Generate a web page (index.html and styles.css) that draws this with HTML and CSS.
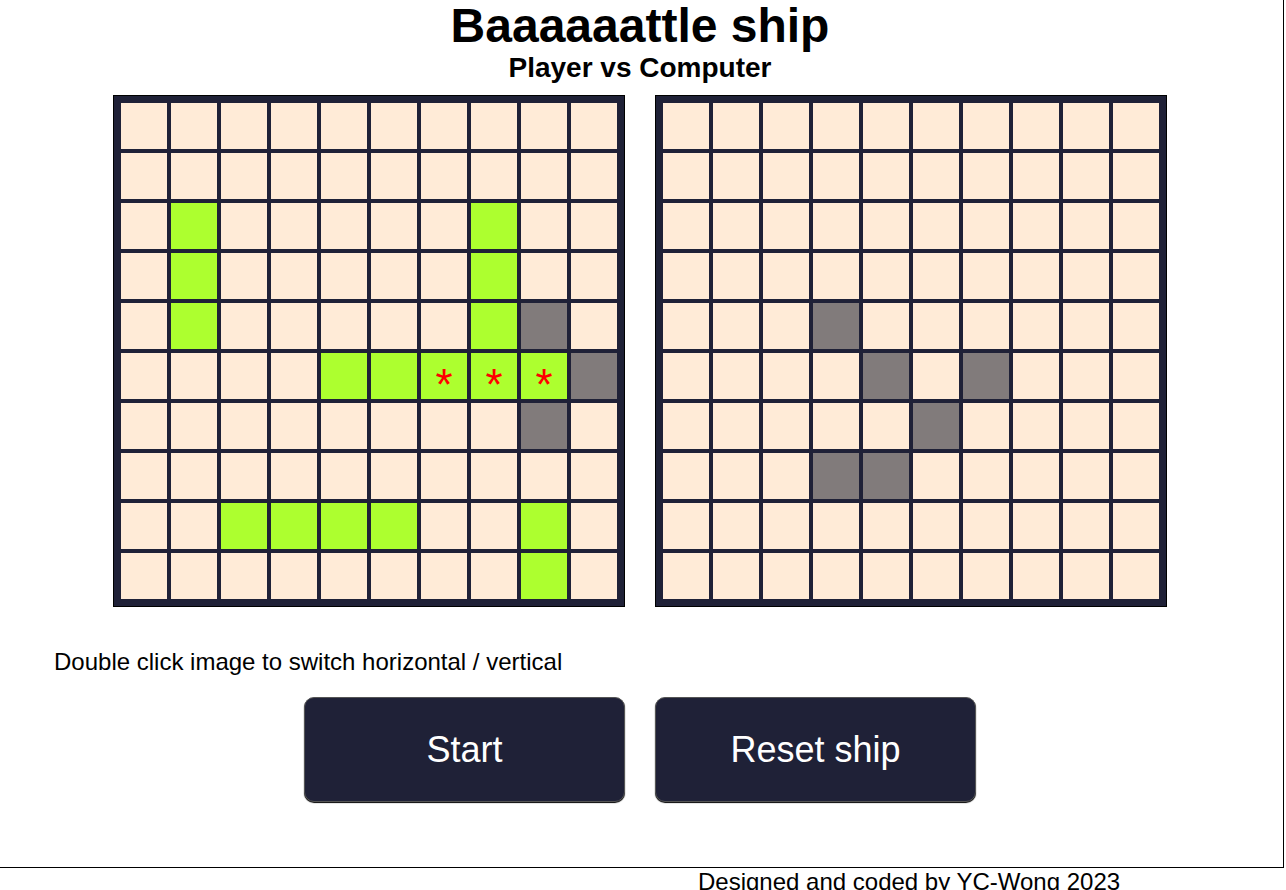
FILE: index.html
```html
<!DOCTYPE html>
<html lang="en">
<head>
<meta charset="utf-8">
<title>Baaaaaattle ship</title>
<link rel="stylesheet" href="styles.css">
</head>
<body>
<div class="page">
  <header class="header">
    <h1 class="title">Baaaaaattle ship</h1>
    <h2 class="subtitle">Player vs Computer</h2>
  </header>
  <main class="boards">
    <div class="board">
      <div class="cell"></div><div class="cell"></div><div class="cell"></div><div class="cell"></div><div class="cell"></div><div class="cell"></div><div class="cell"></div><div class="cell"></div><div class="cell"></div><div class="cell"></div>
      <div class="cell"></div><div class="cell"></div><div class="cell"></div><div class="cell"></div><div class="cell"></div><div class="cell"></div><div class="cell"></div><div class="cell"></div><div class="cell"></div><div class="cell"></div>
      <div class="cell"></div><div class="cell ship"></div><div class="cell"></div><div class="cell"></div><div class="cell"></div><div class="cell"></div><div class="cell"></div><div class="cell ship"></div><div class="cell"></div><div class="cell"></div>
      <div class="cell"></div><div class="cell ship"></div><div class="cell"></div><div class="cell"></div><div class="cell"></div><div class="cell"></div><div class="cell"></div><div class="cell ship"></div><div class="cell"></div><div class="cell"></div>
      <div class="cell"></div><div class="cell ship"></div><div class="cell"></div><div class="cell"></div><div class="cell"></div><div class="cell"></div><div class="cell"></div><div class="cell ship"></div><div class="cell miss"></div><div class="cell"></div>
      <div class="cell"></div><div class="cell"></div><div class="cell"></div><div class="cell"></div><div class="cell ship"></div><div class="cell ship"></div><div class="cell ship hit">*</div><div class="cell ship hit">*</div><div class="cell ship hit">*</div><div class="cell miss"></div>
      <div class="cell"></div><div class="cell"></div><div class="cell"></div><div class="cell"></div><div class="cell"></div><div class="cell"></div><div class="cell"></div><div class="cell"></div><div class="cell miss"></div><div class="cell"></div>
      <div class="cell"></div><div class="cell"></div><div class="cell"></div><div class="cell"></div><div class="cell"></div><div class="cell"></div><div class="cell"></div><div class="cell"></div><div class="cell"></div><div class="cell"></div>
      <div class="cell"></div><div class="cell"></div><div class="cell ship"></div><div class="cell ship"></div><div class="cell ship"></div><div class="cell ship"></div><div class="cell"></div><div class="cell"></div><div class="cell ship"></div><div class="cell"></div>
      <div class="cell"></div><div class="cell"></div><div class="cell"></div><div class="cell"></div><div class="cell"></div><div class="cell"></div><div class="cell"></div><div class="cell"></div><div class="cell ship"></div><div class="cell"></div>
    </div>
    <div class="board">
      <div class="cell"></div><div class="cell"></div><div class="cell"></div><div class="cell"></div><div class="cell"></div><div class="cell"></div><div class="cell"></div><div class="cell"></div><div class="cell"></div><div class="cell"></div>
      <div class="cell"></div><div class="cell"></div><div class="cell"></div><div class="cell"></div><div class="cell"></div><div class="cell"></div><div class="cell"></div><div class="cell"></div><div class="cell"></div><div class="cell"></div>
      <div class="cell"></div><div class="cell"></div><div class="cell"></div><div class="cell"></div><div class="cell"></div><div class="cell"></div><div class="cell"></div><div class="cell"></div><div class="cell"></div><div class="cell"></div>
      <div class="cell"></div><div class="cell"></div><div class="cell"></div><div class="cell"></div><div class="cell"></div><div class="cell"></div><div class="cell"></div><div class="cell"></div><div class="cell"></div><div class="cell"></div>
      <div class="cell"></div><div class="cell"></div><div class="cell"></div><div class="cell miss"></div><div class="cell"></div><div class="cell"></div><div class="cell"></div><div class="cell"></div><div class="cell"></div><div class="cell"></div>
      <div class="cell"></div><div class="cell"></div><div class="cell"></div><div class="cell"></div><div class="cell miss"></div><div class="cell"></div><div class="cell miss"></div><div class="cell"></div><div class="cell"></div><div class="cell"></div>
      <div class="cell"></div><div class="cell"></div><div class="cell"></div><div class="cell"></div><div class="cell"></div><div class="cell miss"></div><div class="cell"></div><div class="cell"></div><div class="cell"></div><div class="cell"></div>
      <div class="cell"></div><div class="cell"></div><div class="cell"></div><div class="cell miss"></div><div class="cell miss"></div><div class="cell"></div><div class="cell"></div><div class="cell"></div><div class="cell"></div><div class="cell"></div>
      <div class="cell"></div><div class="cell"></div><div class="cell"></div><div class="cell"></div><div class="cell"></div><div class="cell"></div><div class="cell"></div><div class="cell"></div><div class="cell"></div><div class="cell"></div>
      <div class="cell"></div><div class="cell"></div><div class="cell"></div><div class="cell"></div><div class="cell"></div><div class="cell"></div><div class="cell"></div><div class="cell"></div><div class="cell"></div><div class="cell"></div>
    </div>
  </main>
  <p class="hint">Double click image to switch horizontal / vertical</p>
  <div class="actions">
    <button class="btn" type="button">Start</button>
    <button class="btn" type="button">Reset ship</button>
  </div>
</div>
<footer class="footer">Designed and coded by YC-Wong 2023</footer>
</body>
</html>
```

FILE: styles.css
```css
html, body {
  margin: 0;
  padding: 0;
  background: #ffffff;
  font-family: "Liberation Sans", Arial, sans-serif;
  color: #000;
}

.page {
  width: 1284px;
  height: 868px;
  box-sizing: border-box;
  padding-right: 3px;
  border-right: 1px solid #000;
  border-bottom: 1px solid #000;
  display: flex;
  flex-direction: column;
  align-items: center;
}

.header {
  display: flex;
  flex-direction: column;
  align-items: center;
}

.title {
  margin: 0;
  font-size: 48px;
  line-height: 52px;
  font-weight: bold;
}

.subtitle {
  margin: 0;
  font-size: 28px;
  line-height: 32px;
  font-weight: bold;
}

.boards {
  display: flex;
  gap: 30px;
  margin-top: 11px;
}

.board {
  display: grid;
  grid-template-columns: repeat(10, 50px);
  grid-template-rows: repeat(10, 50px);
  padding: 5px;
  background: #1f2137;
  border: 1px solid #000;
}

.cell {
  box-sizing: border-box;
  border: 2px solid #1f2137;
  background: #ffebd7;
  display: flex;
  align-items: center;
  justify-content: center;
}

.ship {
  background: #adff2f;
}

.miss {
  background: #817b7b;
}

.hit {
  color: #ff0000;
  font-size: 44px;
  line-height: 1;
  padding-top: 18px;
}

.hint {
  align-self: flex-start;
  margin: 41px 0 0 54px;
  font-size: 24px;
  line-height: 28px;
}

.actions {
  display: flex;
  gap: 30px;
  margin-top: 21px;
}

.btn {
  width: 321px;
  height: 105px;
  background: #1f2137;
  color: #ffffff;
  font-family: "Liberation Sans", Arial, sans-serif;
  font-size: 36px;
  border: 1px solid #555;
  border-radius: 10px;
  box-shadow: 0 1px 1px #000;
  cursor: pointer;
}

.footer {
  padding-left: 698px;
  font-size: 24px;
  line-height: 28px;
  margin-top: 0;
}
```
